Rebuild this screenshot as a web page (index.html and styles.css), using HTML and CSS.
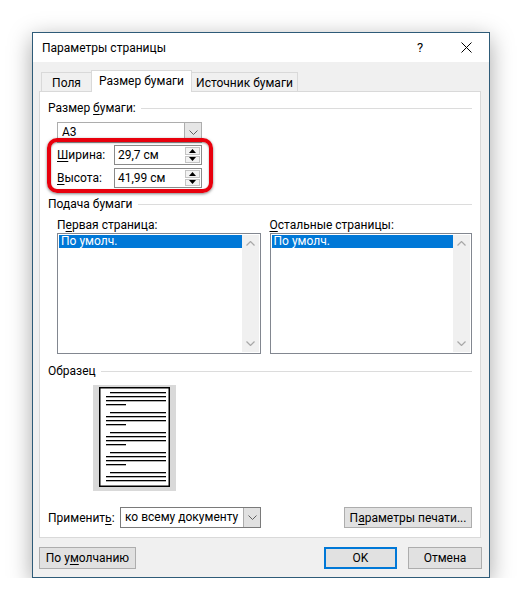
FILE: index.html
```html
<!DOCTYPE html>
<html lang="ru">
<head>
<meta charset="utf-8">
<title>Параметры страницы</title>
<link rel="stylesheet" href="styles.css">
</head>
<body>
<div class="dialog">
  <div class="titlebar">
    <span class="title">Параметры страницы</span>
    <span class="tbtn help">?</span>
    <span class="tbtn close">
      <svg width="11" height="11" viewBox="0 0 11 11"><path d="M0.5 0.5 L10.5 10.5 M10.5 0.5 L0.5 10.5" stroke="#000" stroke-width="1" fill="none"/></svg>
    </span>
  </div>
  <div class="tabs">
    <div class="tab tab-margins">Поля</div>
    <div class="tab tab-size tab-active">Размер бумаги</div>
    <div class="tab tab-source">Источник бумаги</div>
  </div>
  <div class="panel">
    <div class="group-title group-first"><span>Размер <u>б</u>умаги:</span></div>
    <div class="combo combo-size">
      <span class="combo-value">A3</span>
      <span class="combo-arrow"><svg width="9" height="5" viewBox="0 0 9 5"><path d="M0.5 0.5 L4.5 4.5 L8.5 0.5" stroke="#606060" fill="none"/></svg></span>
    </div>
    <div class="field-row field-first">
      <span class="field-label"><u>Ш</u>ирина:</span>
      <div class="spin">
        <span class="spin-value">29,7 см</span>
        <span class="spin-buttons">
          <span class="spin-btn"><svg width="7" height="4" viewBox="0 0 7 4"><path d="M0 4 L3.5 0 L7 4 Z" fill="#000"/></svg></span>
          <span class="spin-btn"><svg width="7" height="4" viewBox="0 0 7 4"><path d="M0 0 L3.5 4 L7 0 Z" fill="#000"/></svg></span>
        </span>
      </div>
    </div>
    <div class="field-row field-second">
      <span class="field-label"><u>В</u>ысота:</span>
      <div class="spin">
        <span class="spin-value">41,99 см</span>
        <span class="spin-buttons">
          <span class="spin-btn"><svg width="7" height="4" viewBox="0 0 7 4"><path d="M0 4 L3.5 0 L7 4 Z" fill="#000"/></svg></span>
          <span class="spin-btn"><svg width="7" height="4" viewBox="0 0 7 4"><path d="M0 0 L3.5 4 L7 0 Z" fill="#000"/></svg></span>
        </span>
      </div>
    </div>

    <div class="group-title group-feed"><span>Подача бумаги</span></div>
    <div class="feed">
      <div class="feed-col feed-col-first">
        <div class="feed-label">П<u>е</u>рвая страница:</div>
        <div class="listbox">
          <div class="list-items"><div class="list-item list-item-selected">По умолч.</div></div>
          <div class="scrollbar">
            <span class="scroll-btn"><svg width="9" height="5" viewBox="0 0 9 5"><path d="M0.5 4.5 L4.5 0.5 L8.5 4.5" stroke="#a8a8a8" stroke-width="1.2" fill="none"/></svg></span>
            <span class="scroll-btn"><svg width="9" height="5" viewBox="0 0 9 5"><path d="M0.5 0.5 L4.5 4.5 L8.5 0.5" stroke="#a8a8a8" stroke-width="1.2" fill="none"/></svg></span>
          </div>
        </div>
      </div>
      <div class="feed-col feed-col-second">
        <div class="feed-label"><u>О</u>стальные страницы:</div>
        <div class="listbox">
          <div class="list-items"><div class="list-item list-item-selected">По умолч.</div></div>
          <div class="scrollbar">
            <span class="scroll-btn"><svg width="9" height="5" viewBox="0 0 9 5"><path d="M0.5 4.5 L4.5 0.5 L8.5 4.5" stroke="#a8a8a8" stroke-width="1.2" fill="none"/></svg></span>
            <span class="scroll-btn"><svg width="9" height="5" viewBox="0 0 9 5"><path d="M0.5 0.5 L4.5 4.5 L8.5 0.5" stroke="#a8a8a8" stroke-width="1.2" fill="none"/></svg></span>
          </div>
        </div>
      </div>
    </div>

    <div class="group-title group-sample"><span>Образец</span></div>
    <div class="preview">
      <svg width="83" height="106" viewBox="0 0 83 106">
        <rect x="0" y="0" width="83" height="106" fill="#d9d9d9"/>
        <rect x="6.75" y="2.75" width="69.5" height="98.5" fill="#fff" stroke="#000" stroke-width="1.5"/>
        <g fill="#000">
          <rect x="17" y="7" width="56" height="1.3"/>
          <rect x="13" y="11" width="60" height="1.3"/>
          <rect x="13" y="15" width="60" height="1.3"/>
          <rect x="13" y="19" width="20" height="1.3"/>
          <rect x="17" y="27" width="56" height="1.3"/>
          <rect x="13" y="31" width="60" height="1.3"/>
          <rect x="13" y="35" width="60" height="1.3"/>
          <rect x="13" y="39" width="20" height="1.3"/>
          <rect x="17" y="47" width="56" height="1.3"/>
          <rect x="13" y="51" width="60" height="1.3"/>
          <rect x="13" y="55" width="60" height="1.3"/>
          <rect x="13" y="59" width="20" height="1.3"/>
          <rect x="17" y="67" width="56" height="1.3"/>
          <rect x="13" y="71" width="60" height="1.3"/>
          <rect x="13" y="75" width="60" height="1.3"/>
          <rect x="13" y="79" width="20" height="1.3"/>
          <rect x="17" y="87" width="56" height="1.3"/>
          <rect x="13" y="91" width="60" height="1.3"/>
          <rect x="13" y="95" width="60" height="1.3"/>
        </g>
      </svg>
    </div>

    <div class="apply-row">
      <span class="apply-label">Применит<u>ь</u>:</span>
      <div class="combo combo-apply">
        <span class="combo-value">ко всему документу</span>
        <span class="combo-arrow combo-arrow-apply"><svg width="9" height="5" viewBox="0 0 9 5"><path d="M0.5 0.5 L4.5 4.5 L8.5 0.5" stroke="#606060" fill="none"/></svg></span>
      </div>
      <button class="btn btn-print">П<u>а</u>раметры печати...</button>
    </div>

    <div class="highlight"></div>
  </div>
  <div class="footer">
    <button class="btn btn-default">По у<u>м</u>олчанию</button>
    <button class="btn btn-ok">OK</button>
    <button class="btn btn-cancel">Отмена</button>
  </div>
</div>
</body>
</html>
```

FILE: styles.css
```css
* { box-sizing: border-box; }
html, body { margin: 0; padding: 0; background: #fff; }
body {
  font-family: Roboto, "Noto Sans", sans-serif;
  font-size: 12px;
  color: #000;
}
u { text-decoration-thickness: 1px; text-underline-offset: 2px; }

.dialog {
  margin: 32px 0 0 32px;
  width: 458px;
  height: 546px;
  border: 1px solid #2e5b78;
  background: #f0f0f0;
  box-shadow: 0 6px 22px rgba(0, 0, 0, 0.35);
  display: flex;
  flex-direction: column;
}

.titlebar {
  height: 29px;
  background: #fff;
  display: flex;
  align-items: center;
  flex: none;
}
.title { flex: 1; padding-left: 9px; }
.tbtn {
  width: 46px;
  height: 29px;
  display: flex;
  align-items: center;
  justify-content: center;
}
.help { font-size: 13px; }

.tabs {
  display: flex;
  align-items: flex-end;
  height: 21px;
  margin-top: 8px;
  padding-left: 8px;
  position: relative;
  z-index: 2;
  flex: none;
}
.tab {
  height: 19px;
  border: 1px solid #d9d9d9;
  border-bottom: none;
  background: #f0f0f0;
  display: flex;
  align-items: center;
  justify-content: center;
  padding-top: 1px;
  margin-left: -1px;
  white-space: nowrap;
}
.tab-margins { margin-left: 0; width: 51px; }
.tab-size { width: 101px; }
.tab-source { width: 107px; }
.tab-active {
  height: 22px;
  background: #fff;
  margin-bottom: -1px;
  position: relative;
  z-index: 3;
  padding-top: 0;
  padding-bottom: 1px;
}

.panel {
  margin-left: 6px;
  width: 442px;
  height: 447px;
  border: 1px solid #d9d9d9;
  background: #fff;
  padding: 0 8px 0 8px;
  position: relative;
  z-index: 1;
  flex: none;
}

.group-title {
  display: flex;
  align-items: center;
  height: 14px;
  line-height: 14px;
  white-space: nowrap;
}
.group-title::after {
  content: "";
  flex: 1;
  border-top: 1px solid #dcdcdc;
  margin-left: 5px;
}
.group-first { margin-top: 9px; }
.group-feed { margin-top: 9px; }
.group-sample { margin-top: 10px; }

.combo {
  display: flex;
  height: 21px;
  border: 1px solid #adadad;
  background: #fff;
}
.combo-value { flex: 1; padding-left: 4px; line-height: 19px; white-space: nowrap; }
.combo-arrow {
  width: 17px;
  border-left: 1px solid #adadad;
  background: #e6e6e6;
  display: flex;
  align-items: center;
  justify-content: center;
}
.combo-size { margin: 7px 0 0 9px; width: 145px; }

.field-row {
  display: flex;
  align-items: center;
  height: 20px;
  margin-left: 9px;
}
.field-first { margin-top: 2px; }
.field-second { margin-top: 3px; }
.field-label { width: 57px; }
.spin {
  width: 88px;
  height: 20px;
  border: 1px solid #8a8a8a;
  background: #fff;
  display: flex;
}
.spin-value { flex: 1; padding-left: 3px; line-height: 18px; }
.spin-buttons {
  width: 15px;
  margin: 1px 1px 1px 0;
  display: flex;
  flex-direction: column;
  gap: 1px;
}
.spin-btn {
  flex: 1;
  border: 1px solid #c4c4c4;
  background: #f2f2f2;
  display: flex;
  align-items: center;
  justify-content: center;
}

.feed {
  display: flex;
  gap: 9px;
  margin: 7px 0 0 9px;
}
.feed-col-first { width: 204px; }
.feed-col-second { width: 203px; }
.feed-label { height: 14px; line-height: 14px; }
.listbox {
  margin-top: 1px;
  height: 121px;
  border: 1px solid #828790;
  padding: 1px;
  background: #fff;
  display: flex;
}
.list-items { flex: 1; }
.list-item { height: 13px; line-height: 13px; padding-left: 2px; }
.list-item-selected { background: #0078d7; color: #fff; }
.scrollbar {
  width: 17px;
  background: #f0f0f0;
  display: flex;
  flex-direction: column;
  justify-content: space-between;
}
.scroll-btn {
  height: 17px;
  display: flex;
  align-items: center;
  justify-content: center;
}

.preview {
  margin: 7px 0 0 45px;
  width: 83px;
  height: 106px;
}
.preview svg { display: block; }

.apply-row {
  display: flex;
  align-items: center;
  height: 21px;
  margin-top: 16px;
}
.apply-label { width: 72px; white-space: nowrap; }
.combo-apply { width: 141px; border-color: #7a7a7a; }
.combo-arrow-apply { border-left-color: #adadad; background: #e1e1e1; }

.btn {
  font: inherit;
  color: #000;
  background: #e1e1e1;
  border: 1px solid #adadad;
  padding: 0;
  margin: 0;
  height: 21px;
}
.btn-print { margin-left: auto; width: 128px; }

.highlight {
  position: absolute;
  left: 7px;
  top: 46px;
  width: 166px;
  height: 55px;
  border: 4px solid #e8000d;
  border-radius: 10px;
  box-shadow: 0 1px 3px rgba(0, 0, 0, 0.5), inset 0 1px 2px rgba(0, 0, 0, 0.4);
}

.footer {
  display: flex;
  margin-top: 9px;
  padding: 0 7px 0 6px;
  flex: none;
}
.footer .btn { height: 22px; }
.btn-default { width: 97px; }
.btn-ok { margin-left: auto; width: 73px; border: 2px solid #0078d7; }
.btn-cancel { margin-left: 11px; width: 74px; }
```
